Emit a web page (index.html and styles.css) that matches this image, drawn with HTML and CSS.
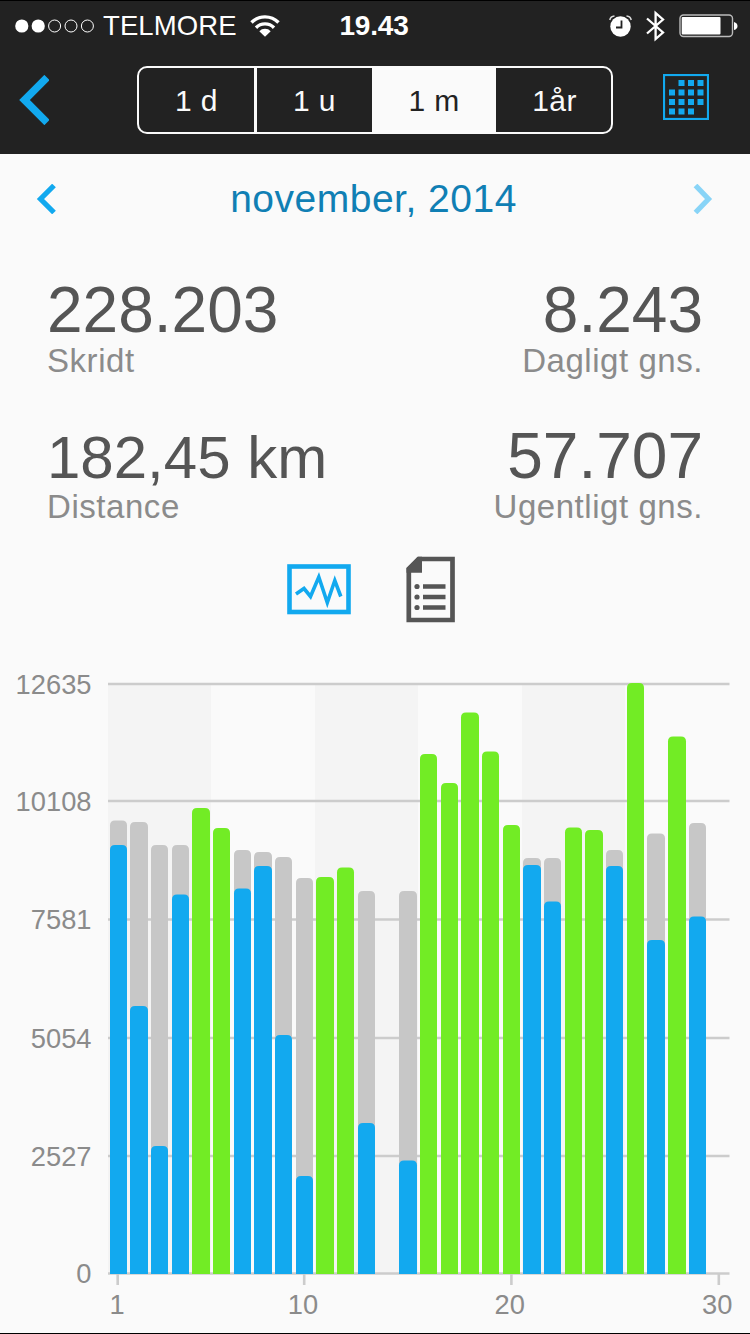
FILE: index.html
```html
<!DOCTYPE html>
<html lang="da">
<head>
  <meta charset="UTF-8">
  <meta name="viewport" content="width=device-width, initial-scale=1">
  <title>Skridt - november, 2014</title>
  <link rel="stylesheet" href="styles.css">
</head>
<body>
<div class="Header">
  <div class="StatusBar">
    <div class="StatusBar__Left">
      <svg class="StatusBar__Signal" width="80" height="14" viewBox="0 0 80 14">
        <g fill="#fff">
          <circle cx="6.8" cy="7" r="6.6"/>
          <circle cx="23.2" cy="7" r="6.6"/>
        </g>
        <g fill="none" stroke="#fff" stroke-width="1">
          <circle cx="39.6" cy="7" r="6"/>
          <circle cx="56" cy="7" r="6"/>
          <circle cx="72.4" cy="7" r="6"/>
        </g>
      </svg>
      <span class="StatusBar__Carrier">TELMORE</span>
      <svg width="30" height="22" viewBox="0 0 30 22">
        <g fill="none" stroke="#fff" stroke-width="3.4">
          <path d="M1.5 7.500a19 19 0 0 1 27 0"/>
          <path d="M6 12.700a12.600 12.600 0 0 1 18 0"/>
        </g>
        <path d="M9.300 16.200a7.800 7.800 0 0 1 11.400 0L15 21.800z" fill="#fff"/>
      </svg>
    </div>
    <div class="StatusBar__Time">19.43</div>
    <div class="StatusBar__Right">
      <svg width="23" height="22" viewBox="0 0 23 22">
        <circle cx="11.500" cy="11.500" r="10.200" fill="#fff"/>
        <path d="M12.500 5.500v7H7" fill="none" stroke="#222" stroke-width="1.800"/>
        <path d="M.8 5Q1.500 1.500 5.500 1.100M22.200 5Q21.500 1.500 17.500 1.100" fill="none" stroke="#ddd" stroke-width="1.500"/>
      </svg>
      <svg width="19" height="32" viewBox="0 0 19 32">
        <path d="M1 8.500L17 22.500 9.600 29V3L17 9.500 1 23.500" fill="none" stroke="#fff" stroke-width="2.300"/>
      </svg>
      <svg width="59" height="24" viewBox="0 0 59 24">
        <rect x="1" y="1" width="52.500" height="21.500" rx="3.500" fill="none" stroke="#bbb" stroke-width="1.400"/>
        <rect x="2.700" y="3" width="38.800" height="17.500" rx="1" fill="#fff"/>
        <path d="M55 8q3.500 1 3.500 4t-3.500 4z" fill="#fff"/>
      </svg>
    </div>
  </div>
  <div class="NavBar">
    <svg class="NavBar__Back" width="30" height="50" viewBox="0 0 30 50">
      <path d="M28 2.500L5.500 25 28 47.500" fill="none" stroke="#12a9ef" stroke-width="7.500"/>
    </svg>
    <div class="Segments">
      <div class="Segments__Item">1 d</div>
      <div class="Segments__Item">1 u</div>
      <div class="Segments__Item Segments__Item--active">1 m</div>
      <div class="Segments__Item Segments__Item--last">1år</div>
    </div>
    <svg class="NavBar__Calendar" width="46" height="46" viewBox="0 0 46 46">
      <rect x="1" y="1" width="44" height="44" fill="none" stroke="#12a9ef" stroke-width="2.200"/>
      <path d="M15.500 6h6v6h-6zM25 6h6v6h-6zM34.500 6h6v6h-6zM6 15.500h6v6H6zM15.500 15.500h6v6h-6zM25 15.500h6v6h-6zM34.500 15.500h6v6h-6zM6 25h6v6H6zM15.500 25h6v6h-6zM25 25h6v6h-6zM34.500 25h6v6h-6zM6 34.500h6v6H6zM15.500 34.500h6v6h-6zM25 34.500h6v6h-6z" fill="#12a9ef"/>
    </svg>
  </div>
</div>

<div class="Period">
  <svg width="20" height="30" viewBox="0 0 20 30">
    <path d="M18 1.500L4.500 15 18 28.500" fill="none" stroke="#12a9ef" stroke-width="5.200"/>
  </svg>
  <div class="Period__Name">november, 2014</div>
  <svg width="20" height="30" viewBox="0 0 20 30">
    <path d="M2.500 1.500L15.500 15 2.500 28.500" fill="none" stroke="#88d4f7" stroke-width="5.200"/>
  </svg>
</div>

<div class="Stats">
  <div class="Stats__Row">
    <div class="Stat">
      <div class="Stat__Value">228.203</div>
      <div class="Stat__Label">Skridt</div>
    </div>
    <div class="Stat Stat--right">
      <div class="Stat__Value">8.243</div>
      <div class="Stat__Label">Dagligt gns.</div>
    </div>
  </div>
  <div class="Stats__Row">
    <div class="Stat">
      <div class="Stat__Value Stat__Value--small">182,45 km</div>
      <div class="Stat__Label">Distance</div>
    </div>
    <div class="Stat Stat--right">
      <div class="Stat__Value">57.707</div>
      <div class="Stat__Label">Ugentligt gns.</div>
    </div>
  </div>
</div>

<div class="Views">
  <svg width="64" height="51" viewBox="0 0 64 51">
    <rect x="2.500" y="2.500" width="59" height="45.500" fill="none" stroke="#12a9ef" stroke-width="4.600"/>
    <path d="M9 30l8-5.500 6.500 8L31.800 13l8.500 25.500 7.500-22 6 16" fill="none" stroke="#12a9ef" stroke-width="3.600"/>
  </svg>
  <svg width="50" height="67" viewBox="0 0 50 67">
    <path d="M2.800 13L13 3h33.500v61H2.800z" fill="none" stroke="#555" stroke-width="4.700"/>
    <path d="M.5 12L11.500.7H16v16H.5z" fill="#555"/>
    <path d="M17 30.500h22.500M17 41h22.500M17 51.500h22.500" stroke="#555" stroke-width="4.600"/>
    <g fill="#555">
      <circle cx="11" cy="30.500" r="2.600"/>
      <circle cx="11" cy="41" r="2.600"/>
      <circle cx="11" cy="51.500" r="2.600"/>
    </g>
  </svg>
</div>

<svg class="Chart" id="Chart" width="750" height="674" viewBox="0 660 750 674"></svg>

<script src="chart.js"></script>
</body>
</html>
```

FILE: styles.css
```css
html, body {
  padding: 0;
  margin: 0;
}

body {
  box-sizing: border-box;
  width: 750px;
  height: 1334px;
  overflow: hidden;
  border-top: 1px solid #000;
  border-bottom: 1px solid #000;
  background-color: #fafafa;
  font-family: "Helvetica Neue", "Liberation Sans", Arial, sans-serif;
}

svg {
  display: block;
  flex: none;
}

.Header {
  box-sizing: border-box;
  height: 153px;
  background-color: #222;
  color: #fff;
}

.StatusBar {
  display: grid;
  grid-template-columns: 1fr auto 1fr;
  align-items: center;
  height: 49px;
  padding: 0 12px 0 15px;
  font-size: 28px;
}

.StatusBar__Left,
.StatusBar__Right {
  display: flex;
  align-items: center;
}

.StatusBar__Carrier {
  margin: 0 13px 0 8px;
  font-size: 27.5px;
  letter-spacing: 0.1px;
}

.StatusBar__Time {
  padding-right: 5px;
  font-weight: bold;
  letter-spacing: -0.2px;
}

.StatusBar__Right {
  justify-content: flex-end;
  gap: 14px;
}

.NavBar {
  display: flex;
  align-items: center;
  padding: 16px 41px 0 19px;
}

.Segments {
  box-sizing: border-box;
  display: flex;
  width: 476px;
  height: 68px;
  margin: 0 50px 0 88px;
  border: 2px solid #fafafa;
  border-radius: 10px;
  overflow: hidden;
}

.Segments__Item {
  box-sizing: border-box;
  width: 118px;
  border-right: 3px solid #fafafa;
  color: #fafafa;
  font-size: 30px;
  letter-spacing: 0.4px;
  line-height: 65px;
  text-align: center;
}

.Segments__Item--active {
  width: 121px;
  background-color: #fafafa;
  color: #222;
}

.Segments__Item--last {
  width: 115px;
  border-right: none;
  padding-left: 2px;
}

.NavBar__Calendar {
  margin-top: -6px;
}

.Period {
  display: flex;
  align-items: center;
  justify-content: space-between;
  height: 90px;
  padding: 0 37px 0 36px;
}

.Period__Name {
  padding-right: 2px;
  color: #107fb4;
  font-size: 39px;
  letter-spacing: 0.5px;
}

.Stats {
  padding: 28px 47px 0;
}

.Stats__Row {
  display: flex;
  justify-content: space-between;
  align-items: flex-end;
  height: 146px;
}

.Stats__Row:first-child {
  height: 108px;
}

.Stat--right {
  text-align: right;
}

.Stat__Value {
  color: #555;
  font-size: 64px;
  line-height: 64px;
}

.Stat__Value--small {
  font-size: 60px;
  line-height: 61px;
}

.Stat__Label {
  color: #8b8b8b;
  font-size: 33px;
  letter-spacing: 0.55px;
  line-height: 38px;
}

.Views {
  box-sizing: border-box;
  display: flex;
  justify-content: center;
  align-items: center;
  gap: 55px;
  height: 134px;
  padding: 0 8px 7px 0;
}

.Chart {
  font-size: 27.3px;
}

.Chart__Band {
  fill: #f4f4f4;
}

.Chart__Line {
  stroke: #ccc;
  stroke-width: 2.6;
}

.Chart__Label {
  fill: #8b8b8b;
}

.Chart__Bar--average {
  fill: #c7c7c7;
}

.Chart__Bar--steps {
  fill: #12a9ef;
}

.Chart__Bar--goal {
  fill: #72ec25;
}
```

FILE: chart.js
```js
const SVG_NS = 'http://www.w3.org/2000/svg';
const chart = document.getElementById('Chart');

const BASE = 1274;
const LEFT = 108;
const RIGHT = 729.5;

// Bar tops per day: [day, steps, goal]. Days without a goal value have reached it and are drawn in green.
const days = [
  [1, 845, 820.5], [2, 1006, 822], [3, 1146, 845], [4, 894.5, 845], [5, 808], [6, 828],
  [7, 888.5, 850], [8, 866, 852], [9, 1035, 857], [10, 1176, 878], [11, 877], [12, 867.5],
  [13, 1123, 891], [15, 1160.5, 891], [16, 754], [17, 783], [18, 712.5], [19, 751.5], [20, 825],
  [21, 865, 858], [22, 901.5, 858], [23, 827.5], [24, 830], [25, 866, 850], [26, 683],
  [27, 940, 833.5], [28, 736.5], [29, 916.5, 823],
];

const gridLines = [[12635, 684], [10108, 801], [7581, 919.5], [5054, 1038], [2527, 1156], [0, 1273.5]];
const ticks = [[1, 117.7, 117], [10, 304.2, 303], [20, 511.4, 509.7], [30, 718.8, 717.3]];

function add(name, attributes, text) {
  const element = document.createElementNS(SVG_NS, name);
  Object.entries(attributes).forEach(([key, value]) => element.setAttribute(key, value));
  if (text !== undefined) {
    element.textContent = text;
  }
  chart.appendChild(element);
}

function addBar(day, top, type) {
  const x = 110 + (day - 1) * 20.69;
  const left = Math.floor(x);
  const right = Math.ceil(x + 16.4);
  const d = `M${left} ${BASE}V${top + 5}q0-5 5-5H${right - 5}q5 0 5 5V${BASE}z`;
  add('path', { class: `Chart__Bar--${type}`, d });
}

// Every other five day period gets a darker background.
[108, 315, 522].forEach(x => {
  add('rect', { class: 'Chart__Band', x, y: 685, width: 103, height: BASE - 685 });
});

gridLines.forEach(([value, y]) => {
  add('line', { class: 'Chart__Line', x1: LEFT, x2: RIGHT, y1: y, y2: y });
  add('text', { class: 'Chart__Label', x: 91.5, y: y + 9.5, 'text-anchor': 'end' }, value);
});

ticks.forEach(([day, x, labelX]) => {
  add('line', { class: 'Chart__Line', x1: x, x2: x, y1: BASE, y2: 1285 });
  add('text', { class: 'Chart__Label', x: labelX, y: 1313.5, 'text-anchor': 'middle' }, day);
});

days.forEach(([day, steps, goal]) => {
  if (goal) {
    addBar(day, goal, 'average');
  }
  addBar(day, steps, goal ? 'steps' : 'goal');
});
```
